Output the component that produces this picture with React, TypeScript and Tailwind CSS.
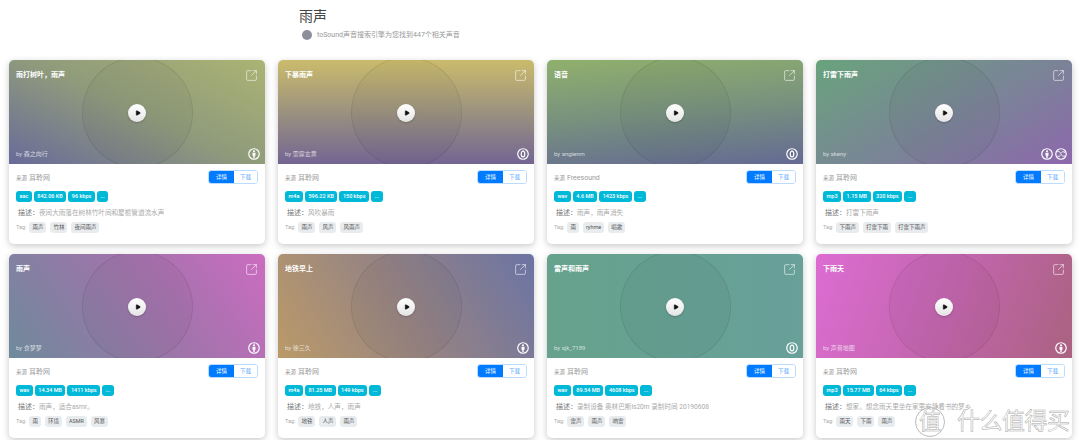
import { SquareArrowOutUpRight, Play } from "lucide-react";

type Lic = "by" | "zero" | "sampling";

const CARDS = [
  { title: "雨打树叶，雨声", by: "by 森之向行", source: "耳聆网", fmt: ["aac", "842.06 KB", "96 kbps"], desc: "夜间大雨落在树林竹叶间和屋檐管道流水声", tags: ["雨声", "竹林", "夜间雨声"], lic: ["by"] as Lic[], bg: "bg-[linear-gradient(205deg,#abb473_0%,#8f9a7c_50%,#686b99_100%)]" },
  { title: "下暴雨声", by: "by 雷霆玄黄", source: "耳聆网", fmt: ["m4a", "596.22 KB", "150 kbps"], desc: "风吹暴雨", tags: ["雨声", "风声", "风雨声"], lic: ["zero"] as Lic[], bg: "bg-[linear-gradient(180deg,#cbbb6c_0%,#9b927f_50%,#736593_100%)]" },
  { title: "语音", by: "by angienm", source: "Freesound", fmt: ["wav", "4.6 MB", "1423 kbps"], desc: "雨声，雨声消失", tags: ["雨", "ryhme", "唱歌"], lic: ["zero"] as Lic[], bg: "bg-[linear-gradient(175deg,#90b06c_0%,#77917e_50%,#656a93_100%)]" },
  { title: "打雷下雨声", by: "by skeny", source: "耳聆网", fmt: ["mp3", "1.15 MB", "320 kbps"], desc: "打雷下雨声", tags: ["下雨声", "打雷下雨", "打雷下雨声"], lic: ["by", "sampling"] as Lic[], bg: "bg-[linear-gradient(150deg,#69a37c_0%,#7a8497_55%,#8d68ac_100%)]" },
  { title: "雨声", by: "by 食梦梦", source: "耳聆网", fmt: ["wav", "14.34 MB", "1411 kbps"], desc: "雨声，适合asmr。", tags: ["雨", "环境", "ASMR", "风暴"], lic: ["by"] as Lic[], bg: "bg-[linear-gradient(55deg,#6f8a9b_0%,#a074ab_55%,#cc6cc0_100%)]" },
  { title: "地铁早上", by: "by 徐三久", source: "耳聆网", fmt: ["m4a", "81.25 MB", "149 kbps"], desc: "地铁，人声，雨声", tags: ["地铁", "人声", "雨声"], lic: ["by"] as Lic[], bg: "bg-[linear-gradient(60deg,#bb9a68_0%,#918187_55%,#6b74a4_100%)]" },
  { title: "雷声和雨声", by: "by sjk_7189", source: "耳聆网", fmt: ["wav", "89.54 MB", "4608 kbps"], desc: "录制设备 奥林巴斯ls20m 录制时间 20190608", tags: ["雷声", "雨声", "响雷"], lic: ["zero"] as Lic[], bg: "bg-[linear-gradient(90deg,#66a28c_0%,#68a09a_100%)]" },
  { title: "下雨天", by: "by 声音地图", source: "耳聆网", fmt: ["mp3", "15.77 MB", "64 kbps"], desc: "想家。想念雨天里坐在家里安静看书的梦乡", tags: ["雨天", "下雨", "雨声"], lic: ["by"] as Lic[], bg: "bg-[linear-gradient(110deg,#dd6cd2_0%,#c266ae_50%,#aa6280_100%)]" },
];

function LicIcon({ type }: { type: Lic }) {
  return (
    <svg width="12" height="12" viewBox="0 0 24 24" fill="none" stroke="white" strokeWidth="2.4">
      <circle cx="12" cy="12" r="10.5" />
      {type === "by" && (
        <g fill="white" stroke="none">
          <circle cx="12" cy="6.5" r="2" />
          <path d="M9 9.5h6v6h-1.6v5h-2.8v-5H9z" />
        </g>
      )}
      {type === "zero" && <ellipse cx="12" cy="12" rx="3.6" ry="5.8" />}
      {type === "sampling" && <path d="M4 8c4-3 6 0 8 4s5 6 8 3M5 16c3 2 5 0 6-2M13 9c2-2 4-2 7 0" strokeWidth="2" />}
    </svg>
  );
}

function SoundCard({ card }: { card: (typeof CARDS)[0] }) {
  return (
    <div className="rounded-[5px] bg-white shadow-[0_2px_7px_rgba(0,0,0,0.22)] overflow-hidden h-[184px]">
      <div className={`relative h-[104px] flex flex-col justify-between overflow-hidden pl-[7px] pr-[6px] pt-[9px] pb-[4px] ${card.bg}`}>
        {/* disc */}
        <div className="absolute left-[73px] top-[-3px] w-[111px] h-[111px] rounded-full border border-black/[0.08] bg-black/[0.03]" />
        <div className="absolute left-[119px] top-[44px] w-[18px] h-[18px] rounded-full bg-[linear-gradient(180deg,#ffffff,#e4e4e4)] flex items-center justify-center shadow-[0_1px_2px_rgba(0,0,0,0.2)]">
          <Play size={6} fill="#111" stroke="#111" className="ml-[1px]" />
        </div>

        <div className="relative flex justify-between items-start">
          <span className="text-[7px] leading-[12px] font-bold text-white">{card.title}</span>
          <SquareArrowOutUpRight size={13} strokeWidth={1.3} className="text-white/80 mr-[1px]" />
        </div>
        <div className="relative flex justify-between items-center">
          <span className="text-[6px] leading-[12px] text-white/70">{card.by}</span>
          <span className="flex gap-[2px] mr-[-1px]">
            {card.lic.map((l) => (
              <LicIcon key={l} type={l} />
            ))}
          </span>
        </div>
      </div>

      <div className="pl-[7px] pr-[7px] pt-[6px]">
        <div className="flex items-center justify-between h-[14px]">
          <span className="text-[#999] flex items-baseline gap-[2px] mt-[2px]">
            <span className="text-[5.5px]">来源</span>
            <span className="text-[7px]">{card.source}</span>
          </span>
          <div className="flex h-[14px] w-[50px] rounded-[3px] overflow-hidden border border-[#bcdcff] text-[5.5px]">
            <span className="w-[25px] bg-[#007bff] text-white flex items-center justify-center">详情</span>
            <span className="flex-1 bg-white text-[#5ba8ff] flex items-center justify-center">下载</span>
          </div>
        </div>

        <div className="flex gap-[2px] mt-[7px]">
          {[...card.fmt, "..."].map((f, i) => (
            <span key={i} className="h-[11px] px-[3.5px] rounded-[3px] bg-[#00b8d8] text-white text-[5.5px] font-medium leading-[11px]">
              {f}
            </span>
          ))}
        </div>

        <p className="mt-[5px] ml-[2px] text-[6.6px] leading-[12px] text-[#aaa] whitespace-nowrap">
          <span className="text-[7px] text-[#777]">描述：</span>
          {card.desc}
        </p>

        <div className="flex items-center gap-[4px] mt-[3px]">
          <span className="text-[5.5px] text-[#aaa] mr-[-1px]">Tag:</span>
          {card.tags.map((t) => (
            <span key={t} className="h-[11px] px-[3px] rounded-[3px] bg-[#e9ecef] text-[#555] text-[5.5px] leading-[11px]">
              {t}
            </span>
          ))}
        </div>
      </div>
    </div>
  );
}

export default function App() {
  return (
    <div className="relative h-[440px] w-[1080px] overflow-hidden bg-white font-['Roboto','Noto_Sans_CJK_SC',sans-serif]">
      <div className="ml-[299px] pt-[7px] h-[60px]">
        <h1 className="text-[14px] leading-[18px] text-[#444]">雨声</h1>
        <div className="flex items-center gap-[5px] ml-[3px] mt-[5px]">
          <span className="w-[10px] h-[10px] rounded-full bg-[#8b8f99]" />
          <span className="text-[7px] text-[#999]">toSound声音搜索引擎为您找到447个相关声音</span>
        </div>
      </div>

      <div className="grid grid-cols-[repeat(4,256px)] gap-x-[13px] gap-y-[10px] ml-[9px]">
        {CARDS.map((c) => (
          <SoundCard key={c.title} card={c} />
        ))}
      </div>

      {/* watermark */}
      <div className="absolute left-[915px] top-[405px] flex items-center gap-[12px] text-white/90 [-webkit-text-stroke:0.5px_#a8a8a8]">
        <span className="w-[30px] h-[30px] rounded-full border border-[#bbb] flex items-center justify-center text-[22px] leading-none mt-[2px]">值</span>
        <span className="text-[23px] leading-none tracking-[-0.5px]">什么值得买</span>
      </div>
    </div>
  );
}
